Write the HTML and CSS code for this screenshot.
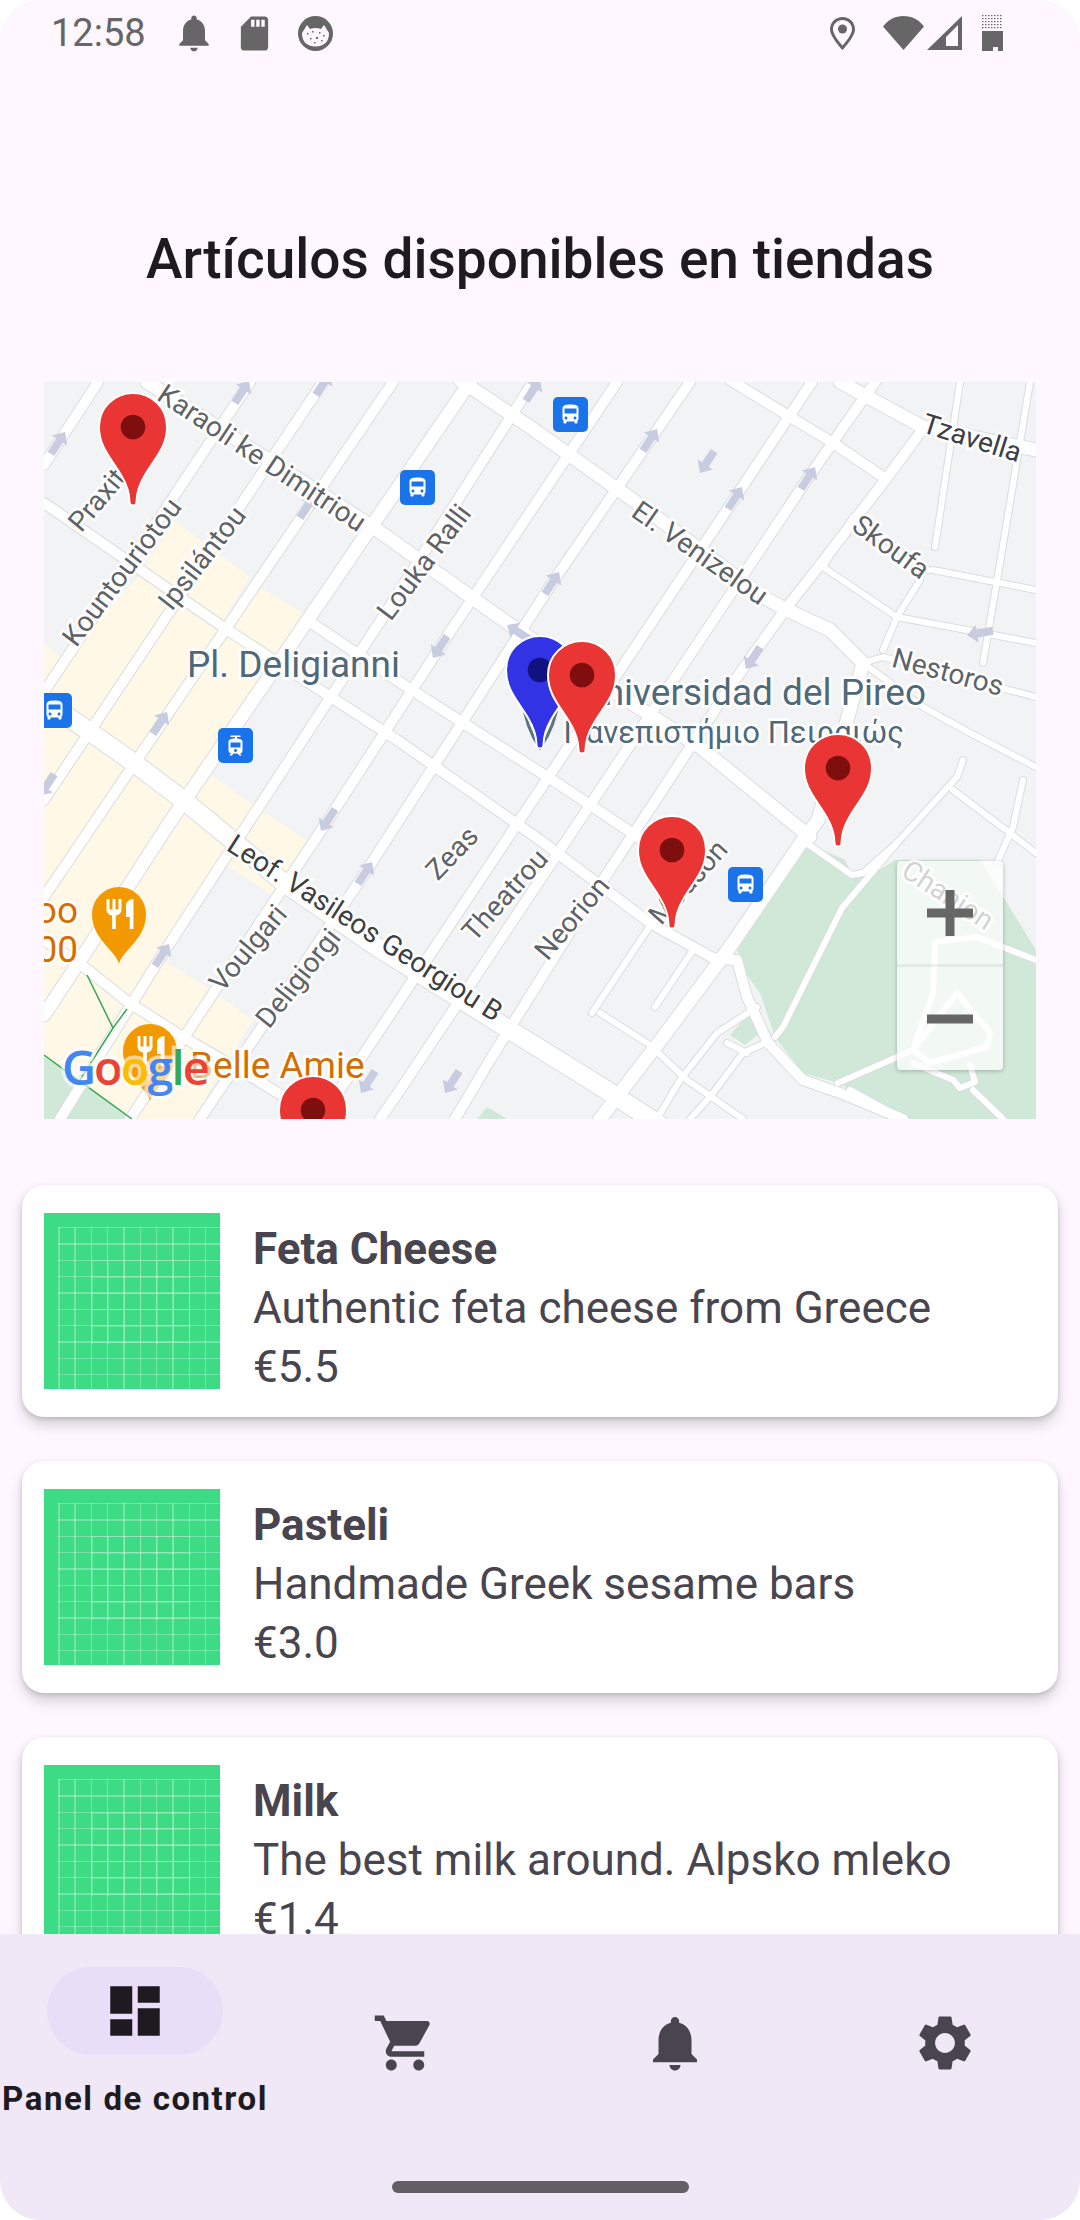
FILE: index.html
```html
<!DOCTYPE html>
<html lang="es">
<head>
  <meta charset="UTF-8">
  <title>Artículos disponibles</title>
  <meta name="viewport" content="width=device-width,initial-scale=1.0"/>
  <link rel="stylesheet" href="styles.css">
</head>
<body>
<div class="screen">

  <div class="statusbar">
    <span class="time">12:58</span>
    <svg class="st-bell" viewBox="0 0 24 24"><path d="M12 22c1.1 0 2-.9 2-2h-4c0 1.1.89 2 2 2zm6-6v-5c0-3.07-1.64-5.64-4.5-6.32V4c0-.83-.67-1.5-1.5-1.5s-1.5.67-1.5 1.5v.68C7.63 5.36 6 7.92 6 11v5l-2 2v1h16v-1l-2-2z"/></svg>
    <svg class="st-sd" viewBox="0 0 24 24"><path d="M18 2h-8L4.02 8 4 20c0 1.1.9 2 2 2h12c1.1 0 2-.9 2-2V4c0-1.1-.9-2-2-2zm-6 6h-2V4h2v4zm3 0h-2V4h2v4zm3 0h-2V4h2v4z"/></svg>
    <svg class="st-cat" viewBox="0 0 35 35">
      <circle cx="17.5" cy="17.5" r="17.5"/>
      <path class="st-hole" d="M4 17 L9 9 L12 13 Q17.5 11 23 13 L26 9 L31 17 Q31 30 17.5 30.500 Q4 30 4 17Z"/>
      <path d="M9 17h1.500v1.500H9zM14 15h1.500v1.500H14zM21 16h1.500v1.500H21zM25 19h1.500v1.500H25zM12 22h1.500v1.500H12zM18 21h2v2h-2zM23 24h1.500v1.500H23zM16 26h1.500v1.500H16z"/>
    </svg>
    <span class="st-gap"></span>
    <svg class="st-loc" viewBox="0 0 25 33"><path fill-rule="evenodd" d="M12.500 0C5.600 0 0 5.400 0 12.200 0 20 12.500 33 12.500 33S25 20 25 12.200C25 5.400 19.400 0 12.500 0zm0 3C17.600 3 22 7 22 12.200c0 5-6 12.500-9.500 16.300C9 24.700 3 17.200 3 12.200 3 7 7.400 3 12.500 3z"/><circle cx="12.500" cy="12" r="4.500"/></svg>
    <svg class="st-wifi" viewBox="0 0 41 34"><path d="M0 10.500C5 4 12 0 20.500 0S36 4 41 10.500L20.500 34z"/></svg>
    <svg class="st-signal" viewBox="0 0 35 34"><path fill-rule="evenodd" d="M35 0V34H0zM31 9 19 21V30H31z"/></svg>
    <svg class="st-batt" viewBox="0 0 21 36">
      <defs><pattern id="batt-dots" width="3" height="3" patternUnits="userSpaceOnUse"><rect width="1.500" height="1.200"/></pattern></defs>
      <rect width="21" height="15" fill="url(#batt-dots)"/>
      <path d="M0 16H21V36H16V32H11V36H0z"/>
    </svg>
  </div>

  <main class="content">
    <h1 class="title">Artículos disponibles en tiendas</h1>

    <div class="map">
      <svg class="map-canvas" viewBox="44 382 992 737">
        <defs>
          <g id="roads-wide">
            <path d="M44 700L130 760 187 803 283 882 377 947 497 1022 600 1086 660 1125"/>
          </g>
          <g id="roads-major">
            <path d="M470 382L217 753 168 825 85 953 44 1015"/>
            <path d="M460 380L530 427 647 510 763 597 787 610 830 630 863 663 847 720 818 820 803 840 730 947 663 1037 600 1119"/>
            <path d="M840 382L923 427 1036 450"/>
            <path d="M147 382L373 527 513 627 700 747 810 837"/>
          </g>
          <g id="roads-mid">
            <path d="M98 382L44 465M250 382L44 692M323 382L44 800M393 382L44 897"/>
            <path d="M533 382L383 617 162 955 60 1119M617 382L440 647 328 820 130 1119M690 382L552 583 365 873 200 1119"/>
            <path d="M44 503L223 627 397 740 540 840 650 923 713 958 737 960 747 997 768 1043 803 1080 840 1093 903 1119"/>
            <path d="M307 620L407 687 560 785 650 845M730 380L833 443 883 477"/>
            <path d="M44 940L88 970 128 1002 183 1037 257 1080 320 1119"/>
            <path d="M880 375L808 478 688 658 560 850 400 1090 380 1119M812 382L735 498 533 800 345 1082 320 1119"/>
            <path d="M920 433L883 483 820 565 787 607 730 687 590 900 490 1060 455 1119"/>
          </g>
          <g id="roads-minor">
            <path d="M960 382L935 547M1030 382L1000 563 983 663"/>
            <path d="M823 567L897 617 1036 643M933 570L1036 590M853 517L928 570M853 517L823 567M920 580L897 617 883 650"/>
            <path d="M863 663L883 657 1036 697M863 663L923 707 970 733 1036 767"/>
            <path d="M953 790L1036 853M963 760L957 777 897 843 863 873 852 875 805 842M1023 780L1013 827 997 863"/>
            <path d="M600 1013L650 1045 687 1080 743 1119M757 1007L717 1033 680 1080 657 1119M765 1043L743 1053 710 1097 690 1119M727 1043L747 1053"/>
            <path d="M592 1013L652 923"/>
            <path d="M655 1007L693 950"/>
            <path d="M897 843L842 908 783 1027 775 1037"/>
            <path d="M838 1083L913 1050 933 993 935 942 977 937 1036 960M913 1050L957 993 990 1033 987 1047 930 1063 913 1050"/>
            <path d="M913 1063L953 1080 960 1088 975 1082 970 1065M973 1090L1003 1119M850 1090L903 1119"/>
          </g>
          <path id="pin" d="M0-112C19-112 34-97 34-78 34-58 22-47 12-30 6-20 3.500-12 3.500-3A3.500 3.500 0 0 1-3.500-3C-3.500-12-6-20-12-30-22-47-34-58-34-78-34-97-19-112 0-112Z"/>
          <g id="pin-red"><use href="#pin" class="pin-red"/><circle cy="-78" r="12.300" class="pin-red-dot"/></g>
          <polygon id="arrow" points="0,-13 9,-3 4,-3 4,13 -4,13 -4,-3 -9,-3"/>
          <path id="poi" d="M0 0C-3-14-27-24-27-50A27 27 0 0 1 27-50C27-24 3-14 0 0Z"/>
          <symbol id="bus" viewBox="0 0 35 35">
            <rect width="35" height="35" rx="5" fill="#1a73e8"/>
            <path transform="translate(5.500 5.500)" fill="#fff" d="M4 16c0 .88.39 1.670 1 2.220V20c0 .55.45 1 1 1h1c.55 0 1-.45 1-1v-1h8v1c0 .55.45 1 1 1h1c.55 0 1-.45 1-1v-1.780c.61-.55 1-1.340 1-2.220V6c0-3.500-3.580-4-8-4s-8 .5-8 4v10zm3.500 1c-.83 0-1.500-.67-1.500-1.500S6.670 14 7.500 14s1.500.67 1.500 1.500S8.330 17 7.500 17zm9 0c-.83 0-1.500-.67-1.500-1.500s.67-1.500 1.500-1.500 1.500.67 1.500 1.500-.67 1.500-1.500 1.500zm1.500-6H6V6h12v5z"/>
          </symbol>
          <symbol id="tram" viewBox="0 0 35 35">
            <rect width="35" height="35" rx="5" fill="#1a73e8"/>
            <path transform="translate(5.500 5.500)" fill="#fff" d="M19 16.940V8.500c0-2.790-2.610-3.400-6.010-3.490l.76-1.510H17V2H7v1.500h4.750l-.76 1.520C7.860 5.110 5 5.730 5 8.500v8.440c0 1.450 1.190 2.660 2.590 2.970L6 21.500v.5h2.230l2-2H14l2 2h2v-.5L16.500 20h-.08c1.690 0 2.580-1.370 2.580-3.060zm-7 1.560c-.83 0-1.500-.67-1.500-1.500s.67-1.500 1.500-1.500 1.500.67 1.500 1.500-.67 1.500-1.500 1.500zm5-4.500H7V9h10v5z"/>
          </symbol>
        </defs>

        <rect x="44" y="382" width="992" height="737" class="m-ground"/>
        <polygon class="m-yellow" points="44,643 60,657 140,575 173,520 250,577 225,617 260,587 303,613 260,690 205,770 250,803 307,840 272,895 223,863 200,903 163,960 207,987 253,1020 193,1119 44,1119"/>
        <polygon class="m-park" points="44,1057 80,1080 132,1119 44,1119"/>
        <polygon class="m-park" points="477,1119 487,1107 507,1119"/>
        <polygon class="m-park" points="805,842 845,860 852,875 870,876 895,860 980,860 1036,950 1036,1119 903,1119 838,1083 803,1073 775,1037 760,993 743,970 737,948"/>
        <polygon class="m-park" points="730,1035 752,1010 760,1033 745,1045"/>

        <use href="#roads-wide" class="casing w-wide"/>
        <use href="#roads-major" class="casing w-major"/>
        <use href="#roads-mid" class="casing w-mid"/>
        <use href="#roads-minor" class="casing w-minor"/>
        <use href="#roads-minor" class="road r-minor"/>
        <use href="#roads-mid" class="road r-mid"/>
        <use href="#roads-major" class="road r-major"/>
        <use href="#roads-wide" class="road r-wide"/>

        <path class="m-path" d="M87 975L113 1028 127 1009M113 1028L80 1080M44 1055L132 1119"/>

        <g class="m-arrows">
          <use href="#arrow" transform="translate(58 443) rotate(33)"/>
          <use href="#arrow" transform="translate(242 392) rotate(33)"/>
          <use href="#arrow" transform="translate(323 384) rotate(33)"/>
          <use href="#arrow" transform="translate(533 390) rotate(33)"/>
          <use href="#arrow" transform="translate(307 507) rotate(33)"/>
          <use href="#arrow" transform="translate(160 723) rotate(33)"/>
          <use href="#arrow" transform="translate(440 647) rotate(213)"/>
          <use href="#arrow" transform="translate(518 632) rotate(-57)"/>
          <use href="#arrow" transform="translate(650 440) rotate(33)"/>
          <use href="#arrow" transform="translate(707 462) rotate(213)"/>
          <use href="#arrow" transform="translate(735 498) rotate(33)"/>
          <use href="#arrow" transform="translate(808 478) rotate(33)"/>
          <use href="#arrow" transform="translate(552 583) rotate(33)"/>
          <use href="#arrow" transform="translate(753 658) rotate(213)"/>
          <use href="#arrow" transform="translate(980 633) rotate(-100)"/>
          <use href="#arrow" transform="translate(47 785) rotate(213)"/>
          <use href="#arrow" transform="translate(328 820) rotate(213)"/>
          <use href="#arrow" transform="translate(365 873) rotate(33)"/>
          <use href="#arrow" transform="translate(162 955) rotate(33)"/>
          <use href="#arrow" transform="translate(368 1082) rotate(213)"/>
          <use href="#arrow" transform="translate(452 1082) rotate(213)"/>
        </g>

        <g class="m-label">
          <text transform="translate(262 458) rotate(33.500)">Karaoli ke Dimitriou</text>
          <text transform="translate(97 500) rotate(-50)">Praxit</text>
          <text transform="translate(122 572) rotate(-53)">Kountouriotou</text>
          <text transform="translate(202 558) rotate(-52)">Ipsilántou</text>
          <text transform="translate(424 562) rotate(-53)">Louka Ralli</text>
          <text transform="translate(700 553) rotate(35)">El. Venizelou</text>
          <text transform="translate(891 547) rotate(36)">Skoufa</text>
          <text transform="translate(948 672) rotate(15)">Nestoros</text>
          <text transform="translate(248 948) rotate(-50)">Voulgari</text>
          <text transform="translate(298 978) rotate(-51.500)">Deligiorgi</text>
          <text transform="translate(452 853) rotate(-46)">Zeas</text>
          <text transform="translate(505 895) rotate(-48)">Theatrou</text>
          <text transform="translate(572 918) rotate(-50)">Neorion</text>
          <text transform="translate(688 882) rotate(-48)">Mouson</text>
          <text transform="translate(948 895) rotate(33)">Chanion</text>
          <text class="dark" transform="translate(972 438) rotate(17.500)">Tzavella</text>
          <text class="dark" transform="translate(365 928) rotate(32.700)">Leof. Vasileos Georgiou B</text>
        </g>

        <g class="m-place">
          <text x="187" y="677">Pl. Deligianni</text>
          <text x="926" y="705" class="end">Universidad del Pireo</text>
          <text x="904" y="743" class="end greek">Πανεπιστήμιο Πειραιώς</text>
        </g>

        <use href="#bus" x="400" y="470" width="35" height="35"/>
        <use href="#bus" x="37" y="693" width="35" height="35"/>
        <use href="#tram" x="218" y="728" width="35" height="35"/>
        <use href="#bus" x="553" y="397" width="35" height="35"/>
        <use href="#bus" x="728" y="867" width="35" height="35"/>

        <g class="m-orange">
          <text x="78" y="923" class="end">oo</text>
          <text x="78" y="962" class="end">00</text>
          <text x="190" y="1078">Belle Amie</text>
        </g>
        <use href="#poi" class="m-poi" transform="translate(119 964)"/>
        <path class="m-fork" transform="translate(102 896) scale(1.500)" d="M11 9H9V2H7v7H5V2H3v7c0 2.120 1.660 3.840 3.750 3.970V22h2.500v-9.030C11.340 12.840 13 11.120 13 9V2h-2v7zm5-3v8h2.500v8H21V2c-2.760 0-5 2.240-5 4z"/>
        <use href="#poi" class="m-poi" transform="translate(150 1101)"/>
        <path class="m-fork" transform="translate(133 1033) scale(1.500)" d="M11 9H9V2H7v7H5V2H3v7c0 2.120 1.660 3.840 3.750 3.970V22h2.500v-9.030C11.340 12.840 13 11.120 13 9V2h-2v7zm5-3v8h2.500v8H21V2c-2.760 0-5 2.240-5 4z"/>

        <text class="m-google" x="62" y="1085"><tspan fill="#4285f4">G</tspan><tspan fill="#ea4335">o</tspan><tspan fill="#fbbc05">o</tspan><tspan fill="#4285f4">g</tspan><tspan fill="#34a853">l</tspan><tspan fill="#ea4335">e</tspan></text>

        <path class="m-teal" d="M523 700C525 722 533 738 540 748C547 738 556 722 558 700"/>
        <g transform="translate(540 748)"><use href="#pin" class="pin-blue"/><circle cy="-78" r="12.300" class="pin-blue-dot"/></g>
        <use href="#pin-red" transform="translate(582 753)"/>
        <use href="#pin-red" transform="translate(133 505)"/>
        <use href="#pin-red" transform="translate(838 846)"/>
        <use href="#pin-red" transform="translate(672 928)"/>
        <use href="#pin-red" transform="translate(313 1188)"/>
      </svg>

      <div class="zoom-ctrl">
        <div class="zoom-btn zoom-in"><svg viewBox="0 0 46 46"><path d="M18.500 0h9v18.500H46v9H27.500V46h-9V27.500H0v-9h18.500z"/></svg></div>
        <div class="zoom-btn"><svg viewBox="0 0 46 46"><path d="M0 18.500h46v9H0z"/></svg></div>
      </div>
    </div>

    <div class="list">
      <div class="card">
        <div class="thumb"></div>
        <div class="card-text">
          <div class="card-name">Feta Cheese</div>
          <div>Authentic feta cheese from Greece</div>
          <div>€5.5</div>
        </div>
      </div>
      <div class="card">
        <div class="thumb"></div>
        <div class="card-text">
          <div class="card-name">Pasteli</div>
          <div>Handmade Greek sesame bars</div>
          <div>€3.0</div>
        </div>
      </div>
      <div class="card">
        <div class="thumb"></div>
        <div class="card-text">
          <div class="card-name">Milk</div>
          <div>The best milk around. Alpsko mleko</div>
          <div>€1.4</div>
        </div>
      </div>
    </div>
  </main>

  <nav class="navbar">
    <div class="nav-items">
      <div class="nav-item active">
        <div class="nav-pill"><svg class="nav-icon" viewBox="0 0 24 24"><path d="M3 13h8V3H3v10zm0 8h8v-6H3v6zm10 0h8V11h-8v10zm0-18v6h8V3h-8z"/></svg></div>
        <span class="nav-label">Panel de control</span>
      </div>
      <div class="nav-item"><svg class="nav-icon" viewBox="0 0 24 24"><path d="M7 18c-1.100 0-1.990.9-1.990 2S5.900 22 7 22s2-.9 2-2-.9-2-2-2zM1 2v2h2l3.600 7.590-1.350 2.450c-.16.28-.25.61-.25.96 0 1.100.9 2 2 2h12v-2H7.420c-.14 0-.25-.11-.25-.25l.03-.12.9-1.630h7.450c.75 0 1.410-.41 1.750-1.030l3.580-6.490c.08-.14.12-.31.12-.48 0-.55-.45-1-1-1H5.210l-.94-2H1zm16 16c-1.100 0-1.990.9-1.990 2s.89 2 1.990 2 2-.9 2-2-.9-2-2-2z"/></svg></div>
      <div class="nav-item"><svg class="nav-icon" viewBox="0 0 24 24"><path d="M12 22c1.100 0 2-.9 2-2h-4c0 1.100.89 2 2 2zm6-6v-5c0-3.070-1.640-5.640-4.500-6.320V4c0-.83-.67-1.500-1.500-1.500s-1.500.67-1.500 1.500v.68C7.630 5.360 6 7.920 6 11v5l-2 2v1h16v-1l-2-2z"/></svg></div>
      <div class="nav-item"><svg class="nav-icon" viewBox="0 0 24 24"><path d="M19.140 12.940c.04-.3.06-.61.06-.94 0-.32-.02-.64-.07-.94l2.030-1.580c.18-.14.23-.41.12-.61l-1.920-3.320c-.12-.22-.37-.29-.59-.22l-2.390.96c-.5-.38-1.030-.7-1.620-.94l-.36-2.540c-.04-.24-.24-.41-.48-.41h-3.840c-.24 0-.43.17-.47.41l-.36 2.540c-.59.24-1.130.57-1.620.94l-2.390-.96c-.22-.08-.47 0-.59.22L2.740 8.870c-.12.21-.08.47.12.61l2.030 1.580c-.05.3-.09.63-.09.94s.02.64.07.94l-2.030 1.580c-.18.14-.23.41-.12.61l1.920 3.320c.12.22.37.29.59.22l2.390-.96c.5.38 1.030.7 1.620.94l.36 2.540c.05.24.24.41.48.41h3.840c.24 0 .44-.17.47-.41l.36-2.540c.59-.24 1.130-.56 1.620-.94l2.390.96c.22.08.47 0 .59-.22l1.920-3.320c.12-.22.07-.47-.12-.61l-2.010-1.580zM12 15.600c-1.980 0-3.600-1.620-3.600-3.600s1.620-3.600 3.600-3.600 3.600 1.620 3.600 3.600-1.620 3.600-3.600 3.600z"/></svg></div>
    </div>
    <div class="home-bar"></div>
  </nav>

</div>
</body>
</html>
```

FILE: styles.css
```css
html, body {
  margin: 0;
  padding: 0;
  background: #fff;
}

.screen {
  width: 1080px;
  height: 2220px;
  display: flex;
  flex-direction: column;
  overflow: hidden;
  border-radius: 40px;
  background: #fef7ff;
  font-family: Roboto, sans-serif;
}

/* status bar */
.statusbar {
  height: 66px;
  flex: none;
  display: flex;
  align-items: center;
  padding-left: 51px;
  padding-right: 77px;
  fill: #666;
}
.time {
  width: 95px;
  font-size: 38px;
  color: #666;
}
.statusbar svg { flex: none; }
.st-bell { width: 44px; height: 44px; margin-left: 26px; }
.st-sd { width: 41px; height: 41px; margin-left: 18px; }
.st-cat { width: 35px; height: 35px; margin-left: 23px; }
.st-hole { fill: #fef7ff; }
.st-gap { flex: 1; }
.st-loc { width: 25px; height: 33px; }
.st-wifi { width: 41px; height: 34px; margin-left: 28px; }
.st-signal { width: 35px; height: 34px; margin-left: 3px; }
.st-batt { width: 21px; height: 36px; margin-left: 20px; }

.content {
  flex: 1;
  min-height: 0;
  overflow: hidden;
}

.title {
  margin: 0;
  padding: 160px 0 90px;
  text-align: center;
  font-size: 55px;
  font-weight: 500;
  line-height: 66px;
  color: #1d1b20;
}

/* map */
.map {
  position: relative;
  width: 992px;
  height: 737px;
  margin: 0 44px;
  overflow: hidden;
}
.map-canvas {
  display: block;
  width: 992px;
  height: 737px;
}
.m-ground { fill: #f1f3f4; }
.m-yellow { fill: #fff8e6; }
.m-park { fill: #cfe8d8; }
.casing, .road {
  fill: none;
  stroke-linejoin: round;
  stroke-linecap: round;
}
.casing { stroke: #dadce0; }
.road { stroke: #fff; }
.w-wide { stroke-width: 20px; }
.r-wide { stroke-width: 18px; }
.w-major { stroke-width: 15px; }
.r-major { stroke-width: 13px; }
.w-mid { stroke-width: 12px; }
.r-mid { stroke-width: 10px; }
.w-minor { stroke-width: 8px; }
.r-minor { stroke-width: 6px; }
.m-path {
  fill: none;
  stroke: #34a853;
  stroke-width: 1.500px;
}
.m-arrows { fill: #c8cce0; }

.m-label text {
  font-size: 28px;
  fill: #5f6368;
  stroke: #fff;
  stroke-width: 5px;
  paint-order: stroke;
  text-anchor: middle;
  dominant-baseline: central;
}
.m-label .dark { fill: #3c4043; }

.m-place text {
  font-size: 37px;
  fill: #50697a;
  stroke: #fff;
  stroke-width: 5px;
  paint-order: stroke;
}
.m-place .greek { font-size: 31px; }
.end { text-anchor: end; }

.m-orange text {
  font-size: 37px;
  fill: #d56e00;
  stroke: #fff;
  stroke-width: 5px;
  paint-order: stroke;
}
.m-poi { fill: #f29900; }
.m-fork { fill: #fff; }
.m-google {
  font-family: "Open Sans", sans-serif;
  font-size: 47px;
  font-weight: 600;
  letter-spacing: -2px;
  stroke: rgba(255, 255, 255, 0.6);
  stroke-width: 7px;
  paint-order: stroke;
}
.m-teal {
  fill: none;
  stroke: #5a7680;
  stroke-width: 3px;
}

.pin-red, .pin-blue {
  stroke: #fff;
  stroke-width: 2px;
}
.pin-red { fill: #ea3535; }
.pin-red-dot { fill: #7f0f0f; }
.pin-blue { fill: #3333e6; }
.pin-blue-dot { fill: #11117f; }

.zoom-ctrl {
  position: absolute;
  left: 853px;
  top: 479px;
  width: 106px;
  height: 209px;
  display: flex;
  flex-direction: column;
  background: rgba(255, 255, 255, 0.72);
  border-radius: 4px;
  box-shadow: 0 1px 4px rgba(0, 0, 0, 0.25);
  fill: #666;
}
.zoom-btn {
  flex: 1;
  display: flex;
  align-items: center;
  justify-content: center;
}
.zoom-in { border-bottom: 3px solid rgba(0, 0, 0, 0.06); }
.zoom-btn svg { width: 46px; height: 46px; }

/* product cards */
.list {
  display: flex;
  flex-direction: column;
  gap: 44px;
  padding: 66px 22px 0;
}
.card {
  flex: none;
  height: 232px;
  box-sizing: border-box;
  display: flex;
  align-items: center;
  gap: 33px;
  padding: 0 22px;
  background: #fff;
  border-radius: 22px;
  box-shadow: 0 8px 14px rgba(0, 0, 0, 0.16), 0 2px 5px rgba(0, 0, 0, 0.14);
}
.thumb {
  flex: none;
  width: 176px;
  height: 176px;
  background-color: #3ddc84;
  background-image:
    repeating-linear-gradient(90deg, rgba(255,255,255,.18) 0 1.500px, transparent 1.500px 16.330px),
    repeating-linear-gradient(180deg, rgba(255,255,255,.18) 0 1.500px, transparent 1.500px 16.330px),
    repeating-linear-gradient(90deg, rgba(255,255,255,.28) 0 1.500px, transparent 1.500px 16.330px),
    repeating-linear-gradient(180deg, rgba(255,255,255,.28) 0 1.500px, transparent 1.500px 16.330px);
  background-size: 100px 84px, 100px 84px, 100% 100%, 100% 100%;
  background-position: 47px 47px, 47px 47px, 14px 14px, 14px 14px;
  background-repeat: no-repeat;
}
.card-text {
  padding-top: 14px;
  font-size: 44px;
  line-height: 59px;
  color: #49454f;
}
.card-name { font-weight: 700; }

/* bottom navigation */
.navbar {
  flex: none;
  height: 286px;
  box-sizing: border-box;
  padding-top: 33px;
  display: flex;
  flex-direction: column;
  background: #f0e8f6;
  position: relative;
  z-index: 1;
}
.nav-items {
  display: flex;
  height: 152px;
}
.nav-item {
  flex: 1;
  display: flex;
  flex-direction: column;
  align-items: center;
  justify-content: center;
  fill: #49454f;
}
.nav-item.active {
  justify-content: flex-start;
  fill: #1d1b20;
}
.nav-icon { width: 66px; height: 66px; }
.nav-pill {
  width: 176px;
  height: 88px;
  flex: none;
  display: flex;
  align-items: center;
  justify-content: center;
  background: #e8def8;
  border-radius: 44px;
}
.nav-label {
  margin-top: 22px;
  font-size: 33px;
  line-height: 44px;
  font-weight: 700;
  letter-spacing: 1.550px;
  white-space: nowrap;
  color: #1d1b20;
}
.home-bar {
  width: 297px;
  height: 12px;
  margin: 62px auto 0;
  border-radius: 6px;
  background: #625f66;
}
```
